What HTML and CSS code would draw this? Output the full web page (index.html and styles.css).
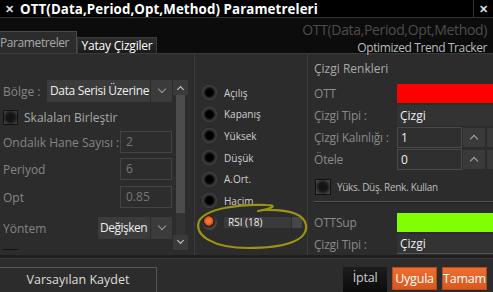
FILE: index.html
```html
<!DOCTYPE html>
<html lang="tr">

<head>
    <meta charset="UTF-8">
    <meta name="viewport" content="width=device-width, initial-scale=1.0">
    <title>OTT Parametreleri</title>

    <link rel="stylesheet" href="styles.css">
</head>

<body>
    <div class="window">
        <!-- title bar -->
        <div class="titlebar">
            <span class="title-x">&#x2715;</span>
            <span class="title">OTT(Data,Period,Opt,Method) Parametreleri</span>
            <span class="title-close">&#x2715;</span>
        </div>

        <!-- tabs + indicator name -->
        <div class="header">
            <div class="tabs">
                <div class="tab tab-active">Parametreler</div>
                <div class="tab">Yatay Çizgiler</div>
            </div>
            <div class="info">
                <div class="info-name">OTT(Data,Period,Opt,Method)</div>
                <div class="info-desc">Optimized Trend Tracker</div>
            </div>
        </div>

        <div class="content">
            <!-- left: parameters -->
            <div class="left">
                <div class="form">
                    <div class="row row-bolge">
                        <span class="label">Bölge :</span>
                        <div class="select select-wide">
                            <span class="select-text">Data Serisi Üzerine</span>
                            <span class="select-btn"><span class="chev"></span></span>
                        </div>
                    </div>
                    <div class="row row-check">
                        <span class="check"></span>
                        <span class="check-label">Skalaları Birleştir</span>
                    </div>
                    <div class="row row-ondalik">
                        <span class="label">Ondalık Hane Sayısı :</span>
                        <span class="input">2</span>
                    </div>
                    <div class="row row-periyod">
                        <span class="label">Periyod</span>
                        <span class="input">6</span>
                    </div>
                    <div class="row row-opt">
                        <span class="label">Opt</span>
                        <span class="input">0.85</span>
                    </div>
                    <div class="row row-yontem">
                        <span class="label">Yöntem</span>
                        <div class="select select-small">
                            <span class="select-text">Değişken</span>
                            <span class="select-btn"><span class="chev"></span></span>
                        </div>
                    </div>
                    <div class="row row-check2">
                        <span class="check check-on"></span>
                    </div>
                </div>
                <div class="scrollbar">
                    <div class="sb-btn"><span class="chev chev-up"></span></div>
                    <div class="sb-thumb"></div>
                    <div class="sb-track"></div>
                    <div class="sb-btn"><span class="chev"></span></div>
                </div>
            </div>

            <!-- middle: data source -->
            <div class="middle">
                <div class="radio-row"><span class="radio"></span><span class="radio-label">Açılış</span></div>
                <div class="radio-row"><span class="radio"></span><span class="radio-label">Kapanış</span></div>
                <div class="radio-row"><span class="radio"></span><span class="radio-label">Yüksek</span></div>
                <div class="radio-row"><span class="radio"></span><span class="radio-label">Düşük</span></div>
                <div class="radio-row"><span class="radio"></span><span class="radio-label">A.Ort.</span></div>
                <div class="radio-row"><span class="radio"></span><span class="radio-label">Hacim</span></div>
                <div class="radio-row">
                    <span class="radio radio-on"></span>
                    <span class="source-box">RSI (18)</span>
                    <span class="source-btn"></span>
                </div>
            </div>

            <!-- right: line colours -->
            <div class="right">
                <div class="section-title">Çizgi Renkleri</div>
                <div class="prop">
                    <span class="prop-label">OTT</span>
                    <span class="color-box color-red"></span>
                </div>
                <div class="prop">
                    <span class="prop-label">Çizgi Tipi :</span>
                    <span class="field">Çizgi</span>
                </div>
                <div class="prop">
                    <span class="prop-label">Çizgi Kalınlığı :</span>
                    <span class="num">1</span>
                    <span class="spin"><span class="chev chev-up"></span></span>
                    <span class="spin-more"></span>
                </div>
                <div class="prop">
                    <span class="prop-label">Ötele</span>
                    <span class="num">0</span>
                    <span class="spin"><span class="chev chev-up"></span></span>
                    <span class="spin-more"></span>
                </div>
                <div class="prop prop-check">
                    <span class="check"></span>
                    <span class="small-label">Yüks. Düş. Renk. Kullan</span>
                </div>
                <div class="divider"></div>
                <div class="prop">
                    <span class="prop-label">OTTSup</span>
                    <span class="color-box color-green"></span>
                </div>
                <div class="prop">
                    <span class="prop-label">Çizgi Tipi :</span>
                    <span class="field field-last">Çizgi</span>
                </div>
            </div>

            <!-- hand drawn highlight -->
            <svg class="annotation" width="120" height="50" viewBox="0 0 120 50">
                <path d="M 62 7 C 74 5, 84 1, 70 1 C 45 0, 10 4, 3 17 C -2 32, 18 44, 52 44 C 88 44, 112 37, 110 21 C 108 10, 94 5, 66 6" />
            </svg>
        </div>

        <div class="footer">
            <div class="btn-default">Varsayılan Kaydet</div>
            <div class="footer-right">
                <div class="btn btn-cancel">İptal</div>
                <div class="btn btn-orange">Uygula</div>
                <div class="btn btn-orange">Tamam</div>
            </div>
        </div>
    </div>
</body>

</html>
```

FILE: styles.css
```css
* {
    box-sizing: border-box;
}

body {
    margin: 0;
    background-color: #2c2c2c;
    font-family: "Open Sans", "Noto Sans", sans-serif;
    font-size: 11px;
    color: #cccccc;
}

.window {
    width: 493px;
    height: 292px;
    display: flex;
    flex-direction: column;
    overflow: hidden;
}

/* title bar */
.titlebar {
    height: 18px;
    background-color: #000;
    border-bottom: 1px solid #333;
    display: flex;
    align-items: center;
}

.title-x {
    width: 18px;
    text-align: center;
    color: #ddd;
    font-size: 11px;
    font-weight: bold;
}

.title {
    flex: 1;
    color: #fff;
    font-weight: bold;
    font-size: 13.3px;
    padding-left: 2px;
    letter-spacing: 0.1px;
}

.title-close {
    width: 20px;
    height: 17px;
    border-left: 1px solid #333;
    text-align: center;
    color: #ddd;
    font-weight: bold;
    font-size: 11px;
    line-height: 17px;
}

/* header */
.header {
    height: 36px;
    background-color: #0c0c0c;
    display: flex;
    justify-content: space-between;
    border-bottom: 1px solid #3a3a3a;
}

.tabs {
    display: flex;
    align-items: flex-end;
}

.tab {
    height: 16px;
    width: 80px;
    font-size: 12px;
    line-height: 15px;
    letter-spacing: -0.2px;
    color: #fff;
    text-align: center;
    background: linear-gradient(#2e2e2e, #1a1a1a);
    border: 1px solid #3c3c3c;
    border-bottom: none;
}

.tab-active {
    height: 22px;
    width: 77px;
    line-height: 21px;
    letter-spacing: -0.4px;
    color: #aaa;
    text-align: left;
    padding-left: 0;
    background: #2c2c2c;
    border-left: none;
    border-color: #4a4a4a;
}

.info {
    text-align: right;
    padding-right: 6px;
    padding-top: 2px;
}

.info-name {
    color: #4c4c4c;
    font-size: 14px;
    letter-spacing: -0.35px;
    line-height: 20px;
}

.info-desc {
    color: #bbb;
    font-size: 12px;
    letter-spacing: -0.4px;
    line-height: 15px;
}

/* main content */
.content {
    position: relative;
    height: 204px;
    display: flex;
    border-bottom: 3px solid #1f1f1f;
}

.left {
    width: 195px;
    display: flex;
    border-right: 1px solid #3c3c3c;
    padding-top: 26px;
    padding-bottom: 5px;
}

.form {
    width: 172px;
    overflow: hidden;
    padding-left: 3px;
}

.row {
    display: flex;
    align-items: center;
    height: 22px;
}

.row-check { height: 15px; margin-top: 8px; }
.row-ondalik { margin-top: 6px; }
.row-periyod { margin-top: 5px; }
.row-opt { margin-top: 6px; }
.row-yontem { margin-top: 9px; }
.row-check2 { height: 15px; margin-top: 10px; }

.label {
    flex: 1;
    color: #858585;
    font-size: 12px;
}

.select {
    display: flex;
    height: 22px;
}

.select-text {
    background-color: #3b3b3b;
    color: #eee;
    font-size: 12px;
    line-height: 22px;
    letter-spacing: -0.35px;
    padding-left: 3px;
    white-space: nowrap;
    overflow: hidden;
}

.select-wide .select-text { width: 103px; }
.select-small .select-text { width: 52px; padding-left: 2px; letter-spacing: -0.5px; }

.select-btn {
    width: 21px;
    margin-left: 1px;
    background-color: #3b3b3b;
    display: flex;
    align-items: center;
    justify-content: center;
}

.chev {
    width: 6px;
    height: 6px;
    border-right: 1.5px solid #999;
    border-bottom: 1.5px solid #999;
    transform: translateY(-2px) rotate(45deg);
}

.chev-up {
    transform: translateY(2px) rotate(-135deg);
}

.check {
    width: 15px;
    height: 15px;
    border: 1px solid #111;
    background: radial-gradient(#151515 0 4px, #2a2a2a 6px, #444 8px);
    margin-right: 6px;
}

.check-on {
    background: radial-gradient(#f06a22 0 4px, #c04d12 5px, #222 6px);
}

.check-label {
    color: #aaa;
    font-size: 12px;
}

.input {
    width: 52px;
    height: 22px;
    border: 1px solid #444;
    background-color: #2d2d2d;
    color: #777;
    font-size: 12px;
    line-height: 20px;
    padding-left: 5px;
}

.scrollbar {
    width: 15px;
    margin-left: 1px;
    display: flex;
    flex-direction: column;
}

.sb-btn {
    height: 15px;
    background-color: #3a3a3a;
    display: flex;
    align-items: center;
    justify-content: center;
}

.sb-btn .chev {
    width: 5px;
    height: 5px;
    border-color: #ccc;
}

.sb-thumb {
    height: 118px;
    margin: 0 3px;
    background-color: #4c4c4c;
}

.sb-track {
    flex: 1;
    margin: 0 3px;
    background-color: #333;
}

/* middle */
.middle {
    width: 113px;
    padding-top: 28px;
    padding-left: 7px;
    border-right: 1px solid #3c3c3c;
}

.radio-row {
    display: flex;
    align-items: center;
    height: 21.6px;
}

.radio {
    width: 15px;
    height: 15px;
    border-radius: 50%;
    background: radial-gradient(#000 0 3.8px, #151515 4.3px, #2a2a2a 5.5px, #474747 7.5px);
    margin-right: 7px;
}

.radio-on {
    background: radial-gradient(circle at 45% 40%, #ff8a4a 0, #ee5a18 3.5px, #c9420c 4.5px, #1b1b1b 5px, #2a2a2a 6px, #474747 7.5px);
}

.radio-label {
    color: #cfcfcf;
    font-size: 10px;
}

.source-box {
    width: 67px;
    height: 11px;
    background-color: #3a3a3a;
    color: #eee;
    font-size: 10px;
    line-height: 11px;
    padding-left: 4px;
}

.source-btn {
    width: 10px;
    height: 11px;
    margin-left: 1px;
    background-color: #474747;
}

/* right */
.right {
    flex: 1;
    padding-left: 6px;
    padding-top: 6px;
}

.section-title {
    color: #aaa;
    font-size: 12px;
    height: 18px;
    line-height: 18px;
    margin-bottom: 4px;
}

.prop {
    display: flex;
    align-items: center;
    height: 22px;
}

.prop-label {
    width: 83px;
    color: #8a8a8a;
    font-size: 12px;
    letter-spacing: -0.2px;
}

.color-box {
    flex: 1;
    height: 19px;
}

.color-red { background-color: #ff0000; }
.color-green { background-color: #80ff00; }

.field {
    flex: 1;
    height: 21px;
    background-color: #333;
    color: #eee;
    font-size: 12px;
    line-height: 21px;
    padding-left: 3px;
}

.field-last {
    height: 20px;
    line-height: 20px;
    border-bottom: 1px solid #555;
}

.num {
    width: 65px;
    height: 21px;
    border: 1px solid #4a4a4a;
    background-color: #2f2f2f;
    color: #eee;
    font-size: 12px;
    line-height: 19px;
    padding-left: 3px;
}

.spin {
    width: 22px;
    height: 19px;
    margin-left: 1px;
    background-color: #3a3a3a;
    display: flex;
    align-items: center;
    justify-content: center;
}

.spin .chev {
    border-color: #aaa;
}

.spin-more {
    flex: 1;
    height: 19px;
    margin-left: 2px;
    background-color: #3a3a3a;
}

.prop-check {
    height: 28px;
    margin-top: 3px;
}

.prop-check .check {
    width: 16px;
    height: 16px;
    margin-left: 1px;
}

.small-label {
    color: #bbb;
    font-size: 10px;
    letter-spacing: -0.3px;
}

.divider {
    height: 2px;
    border-top: 1px solid #555;
    border-bottom: 1px solid #1e1e1e;
    margin: 0 0 8px;
}

.annotation {
    position: absolute;
    left: 196px;
    top: 150px;
    overflow: visible;
}

.annotation path {
    fill: none;
    stroke: #9b9313;
    stroke-width: 2.2;
    stroke-linecap: round;
}

/* footer */
.footer {
    flex: 1;
    display: flex;
    justify-content: space-between;
    align-items: flex-end;
    border-top: 1px solid #3a3a3a;
    padding-top: 4px;
    background-color: #2c2c2c;
}

.btn-default {
    width: 157px;
    height: 25px;
    border: 1px solid #555;
    border-left: none;
    border-bottom: none;
    color: #ddd;
    font-size: 12.5px;
    line-height: 24px;
    text-align: center;
}

.footer-right {
    display: flex;
    align-items: flex-start;
    height: 25px;
    padding-right: 6px;
}

.btn {
    height: 24px;
    font-size: 12.5px;
    line-height: 22px;
    letter-spacing: -0.2px;
    text-align: center;
    margin-left: 5px;
}

.btn-cancel {
    width: 44px;
    height: 25px;
    background: linear-gradient(#1c1c1c, #0c0c0c);
    color: #ccc;
}

.btn-orange {
    width: 45px;
    height: 23px;
    color: #fff;
    background: linear-gradient(#ee6e30, #d9581f);
    border: 1px solid #b84a18;
}
```
